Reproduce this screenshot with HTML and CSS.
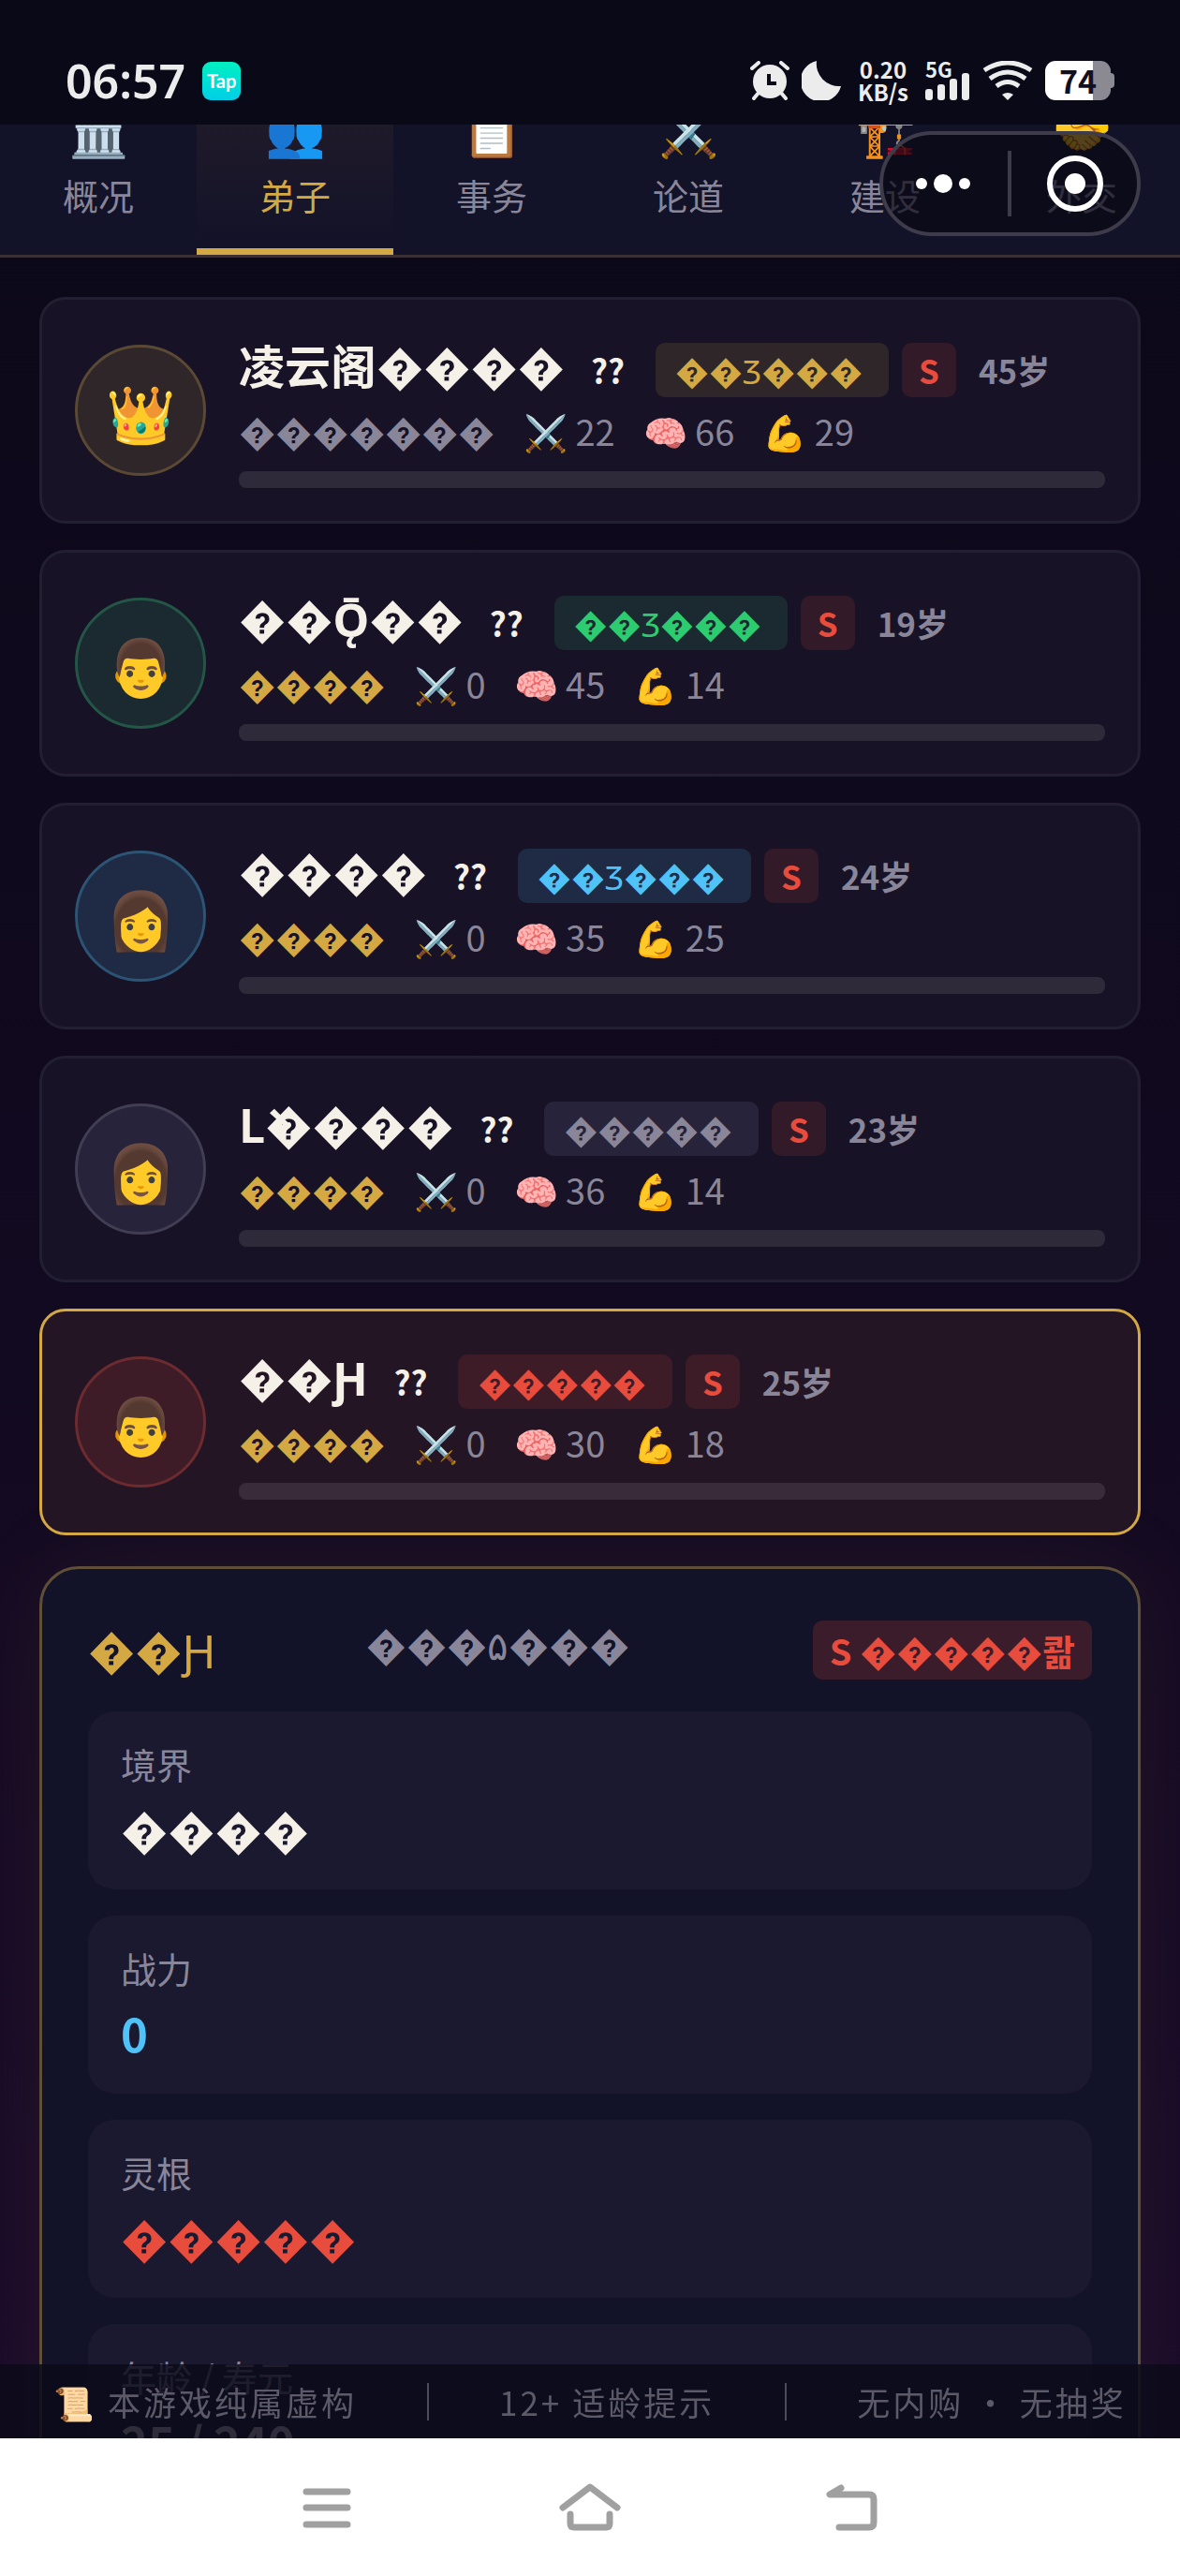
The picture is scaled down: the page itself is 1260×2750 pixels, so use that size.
FILE: index.html
```
<!DOCTYPE html>
<html lang="zh-CN">
<head>
  <meta charset="UTF-8" />
  <meta name="viewport" content="width=device-width,initial-scale=1.0" />
  <title>凌云阁</title>
  <link rel="stylesheet" href="styles.css">
</head>
<body>

  <header class="status">
    <span class="clock">06:57</span>
    <span class="tap">Tap</span>
    <div class="status-icons">
      <svg class="alarm" width="42" height="42" viewBox="0 0 42 42">
        <circle cx="21" cy="22" r="18" fill="#ececec"/>
        <path d="M2 8L9 2M40 8L33 2M9 34L4 40M33 34L38 40" stroke="#ececec" stroke-width="4" stroke-linecap="round"/>
        <path d="M20 14v10h8" fill="none" stroke="#0a0a18" stroke-width="4"/>
      </svg>
      <svg class="moon" width="42" height="42" viewBox="0 0 42 42">
        <path d="M16 0A22 22 0 1 0 42 27A24 24 0 0 1 16 0Z" fill="#ececec"/>
      </svg>
      <span class="speed">0.20<br>KB/s</span>
      <span class="signal">5G
        <svg width="48" height="29" viewBox="0 0 48 29" fill="#ececec">
          <rect x="0" y="17" width="8" height="12" rx="3"/>
          <rect x="13" y="12" width="8" height="17" rx="3"/>
          <rect x="26" y="6" width="8" height="23" rx="3"/>
          <rect x="39" y="0" width="8" height="29" rx="3"/>
        </svg>
      </span>
      <svg class="wifi" width="54" height="42" viewBox="0 0 54 42" fill="none" stroke="#ececec" stroke-width="5">
        <path d="M2 10Q27 -6 52 10M8 19Q27 5 46 19M15 27Q27 18 39 27"/>
        <path d="M21 36Q27 32 33 36L27 42Z" fill="#ececec" stroke="none"/>
      </svg>
      <span class="battery">74</span>
    </div>
  </header>

  <div class="capsule">
    <button type="button" aria-label="更多">
      <svg width="60" height="60" viewBox="0 0 60 60" fill="#fff">
        <circle cx="7" cy="30" r="6"/><circle cx="30" cy="30" r="10"/><circle cx="53" cy="30" r="6"/>
      </svg>
    </button>
    <i></i>
    <button type="button" aria-label="关闭">
      <svg width="60" height="60" viewBox="0 0 60 60">
        <circle cx="30" cy="30" r="27" fill="none" stroke="#fff" stroke-width="6"/>
        <circle cx="30" cy="30" r="11" fill="#fff"/>
      </svg>
    </button>
  </div>

  <nav class="tabs">
    <a href="#"><span class="icon">🏛️</span>概况</a>
    <a href="#" class="active"><span class="icon">👥</span>弟子</a>
    <a href="#"><span class="icon">📋</span>事务</a>
    <a href="#"><span class="icon">⚔️</span>论道</a>
    <a href="#"><span class="icon">🏗️</span>建设</a>
    <a href="#"><span class="icon">🤝</span>外交</a>
  </nav>

  <main>
    <section class="disciples">
      <article class="card gold">
        <div class="avatar">👑</div>
        <div class="info">
          <div class="head">
            <h3>凌云阁&#65533;&#65533;&#65533;&#65533;</h3><b class="sex">??</b>
            <span class="root">&#65533;&#65533;Ʒ&#65533;&#65533;&#65533;</span><span class="grade">S</span><span class="age">45岁</span>
          </div>
          <div class="stats"><span class="realm none">&#65533;&#65533;&#65533;&#65533;&#65533;&#65533;&#65533;</span><span>⚔️ 22</span><span>🧠 66</span><span>💪 29</span></div>
          <div class="bar"></div>
        </div>
      </article>

      <article class="card green">
        <div class="avatar">👨</div>
        <div class="info">
          <div class="head">
            <h3>&#65533;&#65533;Ǭ&#65533;&#65533;</h3><b class="sex">??</b>
            <span class="root">&#65533;&#65533;Ʒ&#65533;&#65533;&#65533;</span><span class="grade">S</span><span class="age">19岁</span>
          </div>
          <div class="stats"><span class="realm">&#65533;&#65533;&#65533;&#65533;</span><span>⚔️ 0</span><span>🧠 45</span><span>💪 14</span></div>
          <div class="bar"></div>
        </div>
      </article>

      <article class="card blue">
        <div class="avatar">👩</div>
        <div class="info">
          <div class="head">
            <h3>&#65533;&#65533;&#65533;&#65533;</h3><b class="sex">??</b>
            <span class="root">&#65533;&#65533;Ʒ&#65533;&#65533;&#65533;</span><span class="grade">S</span><span class="age">24岁</span>
          </div>
          <div class="stats"><span class="realm">&#65533;&#65533;&#65533;&#65533;</span><span>⚔️ 0</span><span>🧠 35</span><span>💪 25</span></div>
          <div class="bar"></div>
        </div>
      </article>

      <article class="card grey">
        <div class="avatar">👩</div>
        <div class="info">
          <div class="head">
            <h3>L&#x300;&#65533;&#65533;&#65533;&#65533;</h3><b class="sex">??</b>
            <span class="root">&#65533;&#65533;&#65533;&#65533;&#65533;</span><span class="grade">S</span><span class="age">23岁</span>
          </div>
          <div class="stats"><span class="realm">&#65533;&#65533;&#65533;&#65533;</span><span>⚔️ 0</span><span>🧠 36</span><span>💪 14</span></div>
          <div class="bar"></div>
        </div>
      </article>

      <article class="card red selected">
        <div class="avatar">👨</div>
        <div class="info">
          <div class="head">
            <h3>&#65533;&#65533;Ԩ</h3><b class="sex">??</b>
            <span class="root">&#65533;&#65533;&#65533;&#65533;&#65533;</span><span class="grade">S</span><span class="age">25岁</span>
          </div>
          <div class="stats"><span class="realm">&#65533;&#65533;&#65533;&#65533;</span><span>⚔️ 0</span><span>🧠 30</span><span>💪 18</span></div>
          <div class="bar"></div>
        </div>
      </article>
    </section>

    <section class="detail">
      <div class="detail-head">
        <h2>&#65533;&#65533;Ԩ</h2>
        <p>&#65533;&#65533;&#65533;۵&#65533;&#65533;&#65533;</p>
        <span class="grade">S &#65533;&#65533;&#65533;&#65533;&#65533;콺</span>
      </div>
      <dl>
        <div><dt>境界</dt><dd>&#65533;&#65533;&#65533;&#65533;</dd></div>
        <div><dt>战力</dt><dd class="power">0</dd></div>
        <div><dt>灵根</dt><dd class="spirit">&#65533;&#65533;&#65533;&#65533;&#65533;</dd></div>
        <div><dt>年龄 / 寿元</dt><dd>25 / 240</dd></div>
      </dl>
    </section>
  </main>

  <footer>
    <div class="notice">
      <span>📜 本游戏纯属虚构</span><i></i><span>12+ 适龄提示</span><i></i><span>无内购 · 无抽奖</span>
    </div>
    <div class="keys">
      <button type="button" aria-label="菜单">
        <svg width="60" height="60" viewBox="0 0 60 60"><path d="M8 13H52M8 30H52M8 48H52"/></svg>
      </button>
      <button type="button" aria-label="主页">
        <svg width="70" height="60" viewBox="0 0 70 60"><path d="M6 30L35 8L64 30M14 37V47Q14 51 18 51H52Q56 51 56 47V37"/></svg>
      </button>
      <button type="button" aria-label="返回">
        <svg width="60" height="60" viewBox="0 0 60 60"><path d="M17 9L5 16H47Q52 16 52 21V46Q52 51 47 51H15"/></svg>
      </button>
    </div>
  </footer>

</body>
</html>
```
FILE: styles.css
```
* { margin: 0; padding: 0; box-sizing: border-box; }
body {
  height: 100vh;
  overflow: hidden;
  display: flex;
  flex-direction: column;
  font-family: "Noto Sans CJK SC", Roboto, "Noto Sans", sans-serif;
  font-size: 38px;
  color: #f5f0e8;
  background: linear-gradient(#0a0818 0%, #0e091c 25%, #120a20 50%, #1b0a2c 100%);
}
button { background: none; border: 0; }
svg { display: block; }

/* status bar */
.status {
  flex: none;
  display: flex;
  align-items: center;
  height: 133px;
  padding: 39px 70px 0;
  background: #090917;
  color: #ececec;
}
.clock { font: 600 50px/60px "Noto Sans", sans-serif; }
.tap {
  margin-left: 18px;
  width: 41px;
  border-radius: 9px;
  background: linear-gradient(#00f0c0, #00cfe8);
  color: #fff;
  font: bold 20px/41px Lato, sans-serif;
  text-align: center;
}
.status-icons {
  margin-left: auto;
  display: flex;
  align-items: center;
  gap: 13px;
}
.speed {
  width: 54px;
  margin: 0 5px 0 5px;
  font-size: 24px; font-weight: bold; line-height: 24px;
  text-align: center;
}
.signal { font-size: 22px; font-weight: bold; line-height: 16px; }
.signal svg { margin-top: -3px; }
.battery {
  position: relative;
  width: 70px;
  margin-right: 4px;
  border-radius: 11px;
  background: linear-gradient(90deg, #fff 73%, #8b8a93 73%);
  color: #101020;
  font-size: 34px; font-weight: bold; line-height: 42px;
  text-align: center;
}
.battery::after {
  content: "";
  position: absolute; right: -4px; top: 13px;
  width: 4px; height: 16px;
  border-radius: 0 4px 4px 0;
  background: #8b8a93;
}

/* floating capsule */
.capsule {
  position: absolute; top: 140px; right: 42px; z-index: 2;
  display: flex;
  align-items: center;
  justify-content: space-between;
  width: 279px; height: 112px;
  padding: 0 36px 0 34px;
  border: 4px solid #3e3c4a;
  border-radius: 56px;
  background: rgba(10, 8, 20, .7);
}
.capsule i { width: 4px; height: 70px; background: #3e3c4a; }

/* tabs */
.tabs {
  flex: none;
  display: flex;
  height: 142px;
  overflow: hidden;
  background: #121228;
  border-bottom: 3px solid #3a3034;
}
.tabs a {
  flex: 1;
  display: flex;
  flex-direction: column;
  justify-content: flex-end;
  padding-bottom: 27px;
  border-bottom: 7px solid transparent;
  color: #8a8699;
  line-height: 60px;
  text-align: center;
  text-decoration: none;
}
.tabs .icon { margin-bottom: 8px; font-size: 52px; line-height: 66px; }
.tabs .active {
  color: #d4a843;
  border-color: #d4a843;
  background: linear-gradient(#1f1a2a, #121228);
}

main {
  flex: 1;
  min-height: 0;
  padding: 42px 42px 0;
}
.disciples {
  display: flex;
  flex-direction: column;
  gap: 28px;
  margin-bottom: 33px;
}
.card {
  display: flex;
  align-items: center;
  gap: 35px;
  padding: 35px;
  border: 3px solid #231f33;
  border-radius: 28px;
  background: #171226;
}
.card.selected { border-color: #d4a843; background: #231524; }
.avatar {
  flex: none;
  width: 140px; height: 140px;
  border: 3px solid;
  border-radius: 50%;
  font-size: 60px; line-height: 134px;
  text-align: center;
}
.info { flex: 1; }
.head { display: flex; align-items: baseline; height: 70px; font-size: 35px; white-space: nowrap; }
.head h3 { font-size: 49px; line-height: 68px; }
.sex { margin: 0 33px 0 28px; }
.root {
  padding: 0 28px 0 21px;
  border-radius: 10px;
  line-height: 58px;
}
.grade {
  margin-left: 14px;
  padding: 0 18px;
  border-radius: 10px;
  background: #331a28;
  color: #e74c3c;
  font-weight: bold; line-height: 58px;
}
.age { margin-left: 24px; color: #8a8699; font-weight: bold; }
.stats { display: flex; gap: 30px; color: #8a8699; line-height: 70px; }
.realm { margin-right: 1px; color: #d4a843; }
.realm.none { color: #8a8699; }
.bar { height: 18px; margin-top: 8px; border-radius: 8px; background: #2e2a3a; }

.gold .avatar, .gold .root { background: #2f2629; }
.gold .avatar { border-color: #5b4934; }
.gold .root { color: #d4a843; }
.green .avatar, .green .root { background: #1a2a30; }
.green .avatar { border-color: #235646; }
.green .root { color: #2ecc71; }
.blue .avatar, .blue .root { background: #1f2b45; }
.blue .avatar { border-color: #2c5474; }
.blue .root { color: #4fc3f7; }
.grey .avatar, .grey .root { background: #27233a; }
.grey .avatar { border-color: #413d52; }
.grey .root { color: #8a8699; }
.red .avatar, .red .root, .red .grade { background: #3d1c28; }
.red .avatar { border-color: #6c2b2f; }
.red .root { color: #e74c3c; }
.selected .bar { background: #3a2b3b; }

/* detail panel */
.detail {
  padding: 49px;
  border: 3px solid #5f4e38;
  border-radius: 42px;
  background: #121228;
  box-shadow: 0 0 105px rgba(212, 168, 67, .08);
}
.detail-head {
  display: flex;
  align-items: flex-start;
  justify-content: space-between;
  height: 74px;
  margin-bottom: 29px;
}
.detail-head h2 { color: #d4a843; font-size: 49px; font-weight: normal; line-height: 72px; }
.detail-head p { padding-right: 21px; color: #8a8699; font-size: 42px; line-height: 60px; }
.detail-head .grade {
  align-self: center;
  background: #3b1c2b;
  line-height: 63px;
}
dl { display: flex; flex-direction: column; gap: 28px; }
dl div { padding: 28px 35px; border-radius: 28px; background: #1a1930; }
dt { margin-bottom: 4px; color: #8a8699; line-height: 56px; }
dd { font-size: 49px; font-weight: bold; line-height: 74px; }
.power { color: #4fc3f7; }
.spirit { color: #e74c3c; }

/* bottom */
footer { position: fixed; left: 0; right: 0; bottom: 0; }
.notice {
  display: flex;
  align-items: center;
  justify-content: center;
  gap: 75px;
  height: 79px;
  background: rgba(12, 11, 26, .85);
  color: #5c5968;
  font-size: 35px;
  letter-spacing: 3px;
  white-space: nowrap;
}
.notice i { width: 2px; height: 40px; background: #4d4a5a; }
.keys {
  display: flex;
  align-items: center;
  justify-content: center;
  gap: 216px;
  height: 147px;
  background: #fff;
}
.keys svg { fill: none; stroke: #a0a0a0; stroke-width: 7; stroke-linecap: round; stroke-linejoin: round; }
```
